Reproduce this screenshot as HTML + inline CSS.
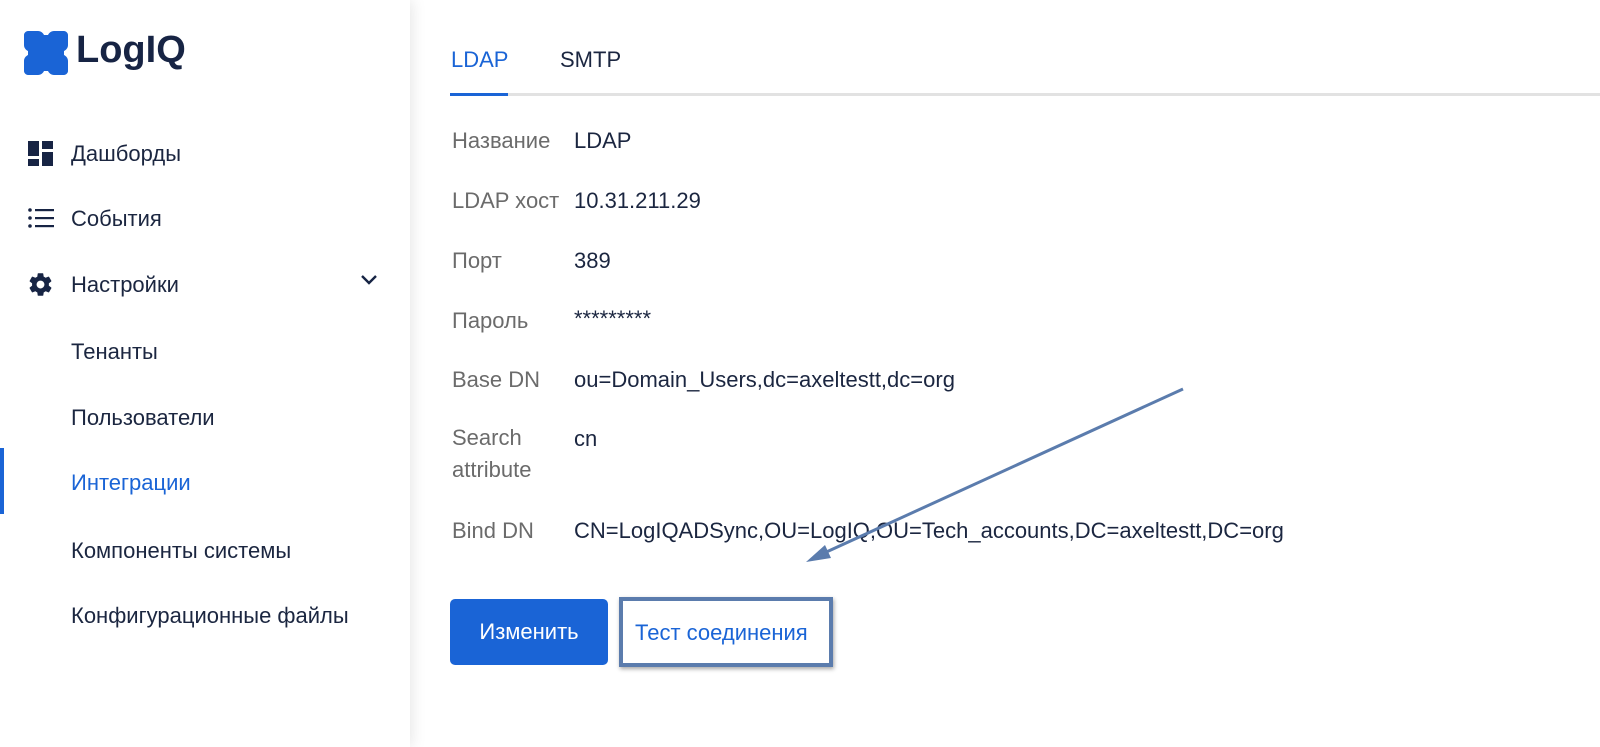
<!DOCTYPE html>
<html><head><meta charset="utf-8"><style>
*{margin:0;padding:0;box-sizing:border-box}
body{width:1600px;height:747px;overflow:hidden;background:#fff;font-family:"Liberation Sans","DejaVu Sans",sans-serif;position:relative;color:#1b2640}
.side{position:absolute;left:0;top:0;width:410px;height:747px;background:#fff;box-shadow:2px 0 14px rgba(0,0,0,0.10);z-index:2}
.t{position:absolute;white-space:nowrap;font-size:22px}
.nav{color:#1b2640}
.lab{color:#6b6b6b}
.val{color:#1b2640}
</style></head><body>
<div class="side">
  <svg style="position:absolute;left:24px;top:31px" width="44" height="44" viewBox="0 0 44 44">
    <path fill="#1a64d6" d="M4 0h10c3 0 5 2 6 4h4c1-2 3-4 6-4h10c2 0 4 2 4 4v10c0 3-2 5-4 6v4c2 1 4 3 4 6v10c0 2-2 4-4 4H30c-3 0-5-2-6-4h-4c-1 2-3 4-6 4H4c-2 0-4-2-4-4V30c0-3 2-5 4-6v-4c-2-1-4-3-4-6V4c0-2 2-4 4-4z"/>
  </svg>
  <div class="t" style="left:76px;top:29px;font-size:38px;font-weight:bold;color:#172444">LogIQ</div>

  <svg style="position:absolute;left:28px;top:141px" width="26" height="26" viewBox="0 0 26 26" fill="#172444">
    <rect x="0" y="0" width="11" height="15"/><rect x="14" y="0" width="11" height="8"/><rect x="0" y="18" width="11" height="7"/><rect x="14" y="11" width="11" height="14"/>
  </svg>
  <div class="t nav" style="left:71px;top:141px">Дашборды</div>

  <svg style="position:absolute;left:28px;top:207px" width="26" height="22" viewBox="0 0 26 22" fill="#172444">
    <circle cx="2" cy="3" r="1.8"/><circle cx="2" cy="11" r="1.8"/><circle cx="2" cy="19" r="1.8"/>
    <rect x="7" y="2" width="19" height="2.2"/><rect x="7" y="10" width="19" height="2.2"/><rect x="7" y="18" width="19" height="2.2"/>
  </svg>
  <div class="t nav" style="left:71px;top:206px">События</div>

  <svg style="position:absolute;left:27px;top:271px" width="27" height="27" viewBox="0 0 24 24" fill="#172444">
    <path d="M19.4 13c.04-.33.06-.66.06-1s-.02-.67-.06-1l2.1-1.650c.2-.15.24-.42.12-.64l-2-3.46c-.12-.22-.39-.3-.61-.22l-2.49 1c-.52-.4-1.080-.73-1.690-.98l-.38-2.650A.49.49 0 0 0 14 2h-4c-.25 0-.46.18-.49.42l-.38 2.65c-.61.25-1.17.59-1.69.98l-2.49-1c-.23-.09-.49 0-.61.22l-2 3.46c-.13.22-.07.49.12.64L4.57 11c-.04.33-.07.66-.07 1s.03.67.07 1l-2.11 1.65c-.19.15-.24.42-.12.64l2 3.46c.12.22.39.3.61.22l2.49-1c.52.4 1.08.73 1.69.98l.38 2.65c.03.24.24.42.49.42h4c.25 0 .46-.18.49-.42l.38-2.65c.61-.25 1.17-.59 1.69-.98l2.49 1c.23.09.49 0 .61-.22l2-3.46c.12-.22.07-.49-.12-.64L19.4 13zM12 15.5A3.5 3.5 0 1 1 12 8.5a3.5 3.5 0 0 1 0 7z"/>
  </svg>
  <div class="t nav" style="left:71px;top:272px">Настройки</div>
  <svg style="position:absolute;left:360px;top:274px" width="18" height="12" viewBox="0 0 18 12"><path d="M2 2l7 7 7-7" fill="none" stroke="#172444" stroke-width="2.4"/></svg>

  <div class="t nav" style="left:71px;top:339px">Тенанты</div>
  <div class="t nav" style="left:71px;top:405px">Пользователи</div>
  <div style="position:absolute;left:0;top:448px;width:4px;height:66px;background:#1a64d6"></div>
  <div class="t" style="left:71px;top:470px;color:#1a64d6">Интеграции</div>
  <div class="t nav" style="left:71px;top:538px">Компоненты системы</div>
  <div class="t nav" style="left:71px;top:603px">Конфигурационные файлы</div>
</div>

<div class="t" style="left:451px;top:47px;color:#1a64d6">LDAP</div>
<div class="t" style="left:560px;top:47px;color:#1b2640">SMTP</div>
<div style="position:absolute;left:450px;top:93px;width:1150px;height:3px;background:#e2e2e2"></div>
<div style="position:absolute;left:450px;top:93px;width:58px;height:3px;background:#1a64d6"></div>

<div class="t lab" style="left:452px;top:128px">Название</div><div class="t val" style="left:574px;top:128px">LDAP</div>
<div class="t lab" style="left:452px;top:188px">LDAP хост</div><div class="t val" style="left:574px;top:188px">10.31.211.29</div>
<div class="t lab" style="left:452px;top:248px">Порт</div><div class="t val" style="left:574px;top:248px">389</div>
<div class="t lab" style="left:452px;top:308px">Пароль</div><div class="t val" style="left:574px;top:306px">*********</div>
<div class="t lab" style="left:452px;top:367px">Base DN</div><div class="t val" style="left:574px;top:367px">ou=Domain_Users,dc=axeltestt,dc=org</div>
<div class="t lab" style="left:452px;top:422px;line-height:32px;white-space:normal;width:110px">Search<br>attribute</div><div class="t val" style="left:574px;top:426px">cn</div>
<div class="t lab" style="left:452px;top:518px">Bind DN</div><div class="t val" style="left:574px;top:518px">CN=LogIQADSync,OU=LogIQ,OU=Tech_accounts,DC=axeltestt,DC=org</div>

<div style="position:absolute;left:450px;top:599px;width:158px;height:66px;background:#1a64d6;border-radius:5px;color:#fff;font-size:22px;line-height:66px;text-align:center">Изменить</div>
<div style="position:absolute;left:619px;top:597px;width:214px;height:70px;border:4px solid #5b7cad;box-shadow:1px 2px 4px rgba(0,0,0,0.35)"></div>
<div class="t" style="left:635px;top:620px;color:#1a64d6">Тест соединения</div>

<svg style="position:absolute;left:0;top:0" width="1600" height="747">
  <line x1="1183" y1="389" x2="822" y2="554" stroke="#5b7cad" stroke-width="3"/>
  <polygon points="806,562 825,545 831,558" fill="#5b7cad"/>
</svg>
</body></html>
